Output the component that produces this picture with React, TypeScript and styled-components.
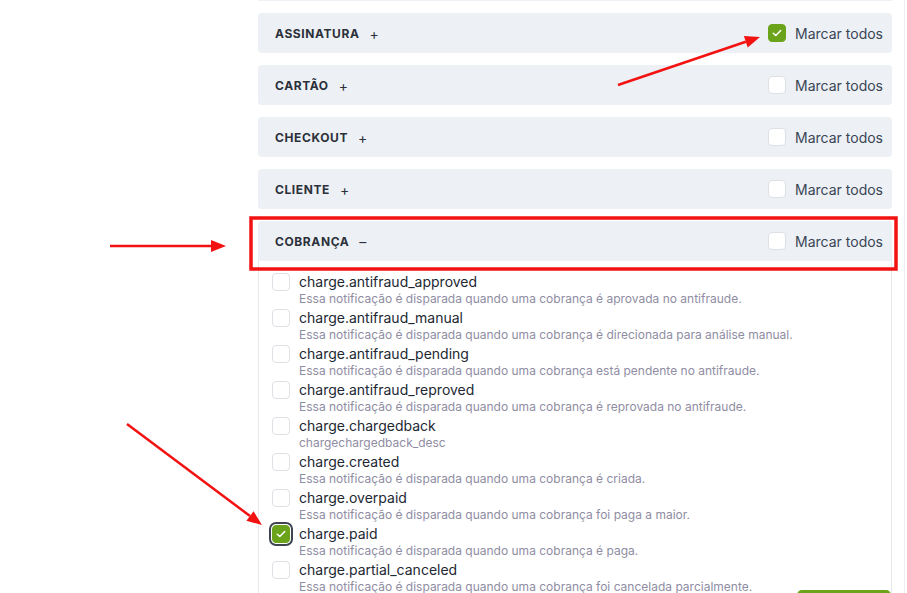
import React from "react";
import styled, { createGlobalStyle, css } from "styled-components";

const Global = createGlobalStyle`
  html, body { margin: 0; padding: 0; background: #ffffff; }
  body { font-family: Inter, "Noto Sans", sans-serif; overflow: hidden; height: 593px; }
  * { box-sizing: border-box; }
`;

const Page = styled.div`
  position: relative;
  width: 907px;
  height: 593px;
  overflow: hidden;
  display: flex;
  align-items: flex-start;
`;

const Column = styled.div`
  margin-left: 258px;
  width: 634px;
  display: flex;
  flex-direction: column;
  gap: 12px;
  & > * { flex-shrink: 0; }
`;

const ScrollEdge = styled.div`
  margin-left: 12px;
  width: 1px;
  height: 593px;
  background: #eceef2;
`;

const Stub = styled.div`
  height: 1px;
  background: #edf0f4;
  border-radius: 0 0 4px 4px;
`;

const Section = styled.div`
  display: flex;
  flex-direction: column;
`;

const Header = styled.div<{ $open?: boolean }>`
  height: 40px;
  flex-shrink: 0;
  background: #edf0f4;
  border-radius: ${(p) => (p.$open ? "4px 4px 0 0" : "4px")};
  display: flex;
  align-items: center;
  justify-content: space-between;
  padding: 0 9px 0 17px;
`;

const Title = styled.div`
  display: flex;
  align-items: center;
  gap: 10px;
  font-size: 12px;
  font-weight: 700;
  letter-spacing: 0.6px;
  color: #2b303a;
`;

const Toggle = styled.span`
  font-weight: 400;
  font-size: 14px;
  letter-spacing: 0;
  color: #2b303a;
`;

const MarkAll = styled.label`
  display: flex;
  align-items: center;
  gap: 9px;
  font-size: 14px;
  color: #3a4556;
`;

const Box = styled.span<{ $checked?: boolean; $focus?: boolean }>`
  width: 18px;
  height: 18px;
  flex: none;
  border-radius: 4px;
  border: 1px solid #dde0e5;
  background: #ffffff;
  display: flex;
  align-items: center;
  justify-content: center;
  ${(p) =>
    p.$checked &&
    css`
      background: #6ba41a;
      border-color: #6ba41a;
    `}
  ${(p) =>
    p.$focus &&
    css`
      box-shadow: 0 0 0 1px #ffffff, 0 0 0 3px #3f4550;
    `}
`;

const Body = styled.div`
  border-left: 1px solid #e6e8ec;
  border-right: 1px solid #e6e8ec;
  padding: 12px 13px 0 13px;
  display: flex;
  flex-direction: column;
  gap: 3px;
`;

const Item = styled.div`
  display: flex;
  align-items: flex-start;
  gap: 9px;
`;

const ItemText = styled.div`
  display: flex;
  flex-direction: column;
`;

const ItemName = styled.div`
  font-size: 14px;
  line-height: 18px;
  color: #222833;
`;

const ItemDesc = styled.div`
  font-size: 12px;
  line-height: 15px;
  color: #8f8da3;
`;

const SaveButton = styled.div`
  position: absolute;
  left: 797px;
  top: 590px;
  width: 94px;
  height: 30px;
  background: #6ba41a;
  border-radius: 5px;
`;

const Annotations = styled.svg`
  position: absolute;
  left: 0;
  top: 0;
  pointer-events: none;
`;

const Check = () => (
  <svg width="10" height="8" viewBox="0 0 10 8">
    <path d="M1.3 4.2 L3.8 6.5 L8.7 1.5" fill="none" stroke="#fff" strokeWidth="1.5" strokeLinecap="round" strokeLinejoin="round" />
  </svg>
);

const sections = [
  { name: "ASSINATURA", checked: true },
  { name: "CARTÃO" },
  { name: "CHECKOUT" },
  { name: "CLIENTE" },
];

const p = "Essa notificação é disparada quando uma cobrança ";
const items = [
  { n: "charge.antifraud_approved", d: p + "é aprovada no antifraude." },
  { n: "charge.antifraud_manual", d: p + "é direcionada para análise manual." },
  { n: "charge.antifraud_pending", d: p + "está pendente no antifraude." },
  { n: "charge.antifraud_reproved", d: p + "é reprovada no antifraude." },
  { n: "charge.chargedback", d: "chargechargedback_desc" },
  { n: "charge.created", d: p + "é criada." },
  { n: "charge.overpaid", d: p + "foi paga a maior." },
  { n: "charge.paid", d: p + "é paga.", checked: true },
  { n: "charge.partial_canceled", d: p + "foi cancelada parcialmente." },
];

const Arrow = ({ x1, y1, x2, y2 }: { x1: number; y1: number; x2: number; y2: number }) => {
  const a = Math.atan2(y2 - y1, x2 - x1);
  const L = 15;
  const W = 6;
  const bx = x2 - L * Math.cos(a);
  const by = y2 - L * Math.sin(a);
  const px = -Math.sin(a) * W;
  const py = Math.cos(a) * W;
  return (
    <g>
      <line x1={x1} y1={y1} x2={bx} y2={by} stroke="#f21212" strokeWidth="2.5" />
      <polygon points={`${x2},${y2} ${bx + px},${by + py} ${bx - px},${by - py}`} fill="#f21212" />
    </g>
  );
};

export default function App() {
  return (
    <>
      <Global />
      <Page>
        <Column>
          <Stub />
          {sections.map((s) => (
            <Header key={s.name}>
              <Title>
                {s.name}
                <Toggle>+</Toggle>
              </Title>
              <MarkAll>
                <Box $checked={s.checked}>{s.checked && <Check />}</Box>
                Marcar todos
              </MarkAll>
            </Header>
          ))}
          <Section>
            <Header $open>
              <Title>
                COBRANÇA
                <Toggle>–</Toggle>
              </Title>
              <MarkAll>
                <Box />
                Marcar todos
              </MarkAll>
            </Header>
            <Body>
              {items.map((it) => (
                <Item key={it.n}>
                  <Box $checked={it.checked} $focus={it.checked}>
                    {it.checked && <Check />}
                  </Box>
                  <ItemText>
                    <ItemName>{it.n}</ItemName>
                    <ItemDesc>{it.d}</ItemDesc>
                  </ItemText>
                </Item>
              ))}
            </Body>
          </Section>
        </Column>
        <ScrollEdge />
        <SaveButton />
        <Annotations width="907" height="593" viewBox="0 0 907 593">
          <rect x="251" y="218" width="645" height="51" fill="none" stroke="#f21212" strokeWidth="3.5" />
          <Arrow x1={618} y1={85} x2={760} y2={37} />
          <Arrow x1={110} y1={246} x2={226} y2={246} />
          <Arrow x1={127} y1={424} x2={262} y2={525} />
        </Annotations>
      </Page>
    </>
  );
}
